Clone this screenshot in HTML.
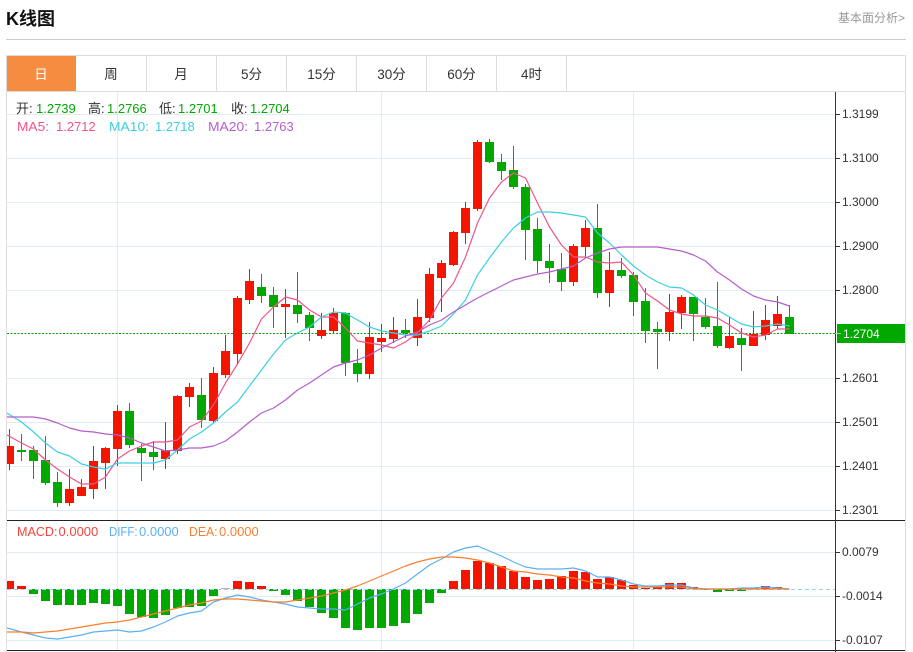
<!DOCTYPE html>
<html><head><meta charset="utf-8"><style>
html,body{margin:0;padding:0;background:#fff;width:913px;height:652px;overflow:hidden}
svg{display:block;font-family:"Liberation Sans","Noto Sans CJK SC",sans-serif}
</style></head><body>
<svg width="913" height="652" viewBox="0 0 913 652" xmlns="http://www.w3.org/2000/svg">
<rect width="913" height="652" fill="#fff"/>
<text x="6" y="25" font-size="18" font-weight="bold" fill="#111">K线图</text>
<text x="838" y="22" font-size="12" fill="#999">基本面分析&gt;</text>
<path d="M6 39.5H906" stroke="#ccc" fill="none"/>
<!-- tabs -->
<path d="M6 55.5H905.5V652M6.5 55.5V652M6 91.5H905.5" stroke="#ddd" fill="none"/>
<path d="M146.5 56V91M216.5 56V91M286.5 56V91M356.5 56V91M426.5 56V91M496.5 56V91M566.5 56V91" stroke="#ddd" fill="none"/>
<rect x="7" y="56" width="69" height="35" fill="#f58c40"/>
<g font-size="13.5" text-anchor="middle" fill="#333">
<text x="41" y="79" fill="#fff">日</text>
<text x="111" y="79">周</text>
<text x="181" y="79">月</text>
<text x="251.500" y="79">5分</text>
<text x="321.500" y="79">15分</text>
<text x="391.500" y="79">30分</text>
<text x="461.500" y="79">60分</text>
<text x="531.500" y="79">4时</text>
</g>
<!-- grid -->
<path d="M7 114.5H835M7 158.5H835M7 202.5H835M7 246.5H835M7 290.5H835M7 378.5H835M7 422.5H835M7 466.5H835M7 510.5H835M7 552.5H835M7 596.5H835M7 640.5H835M117.5 92V650M381.5 92V650M633.5 92V650" stroke="#e2ebf2" fill="none"/>
<path d="M7 333.5H835" stroke="#129a12" stroke-dasharray="2 1.5" fill="none"/>
<!-- candles -->
<path fill="none" stroke="#f41500" d="M9.5 429V470M69.5 469V506M81.5 479V496M93.5 446V499M105.5 447V489M117.5 405V466M165.5 422V469M177.5 395V454M189.5 383V407M213.5 367V423M225.5 335V378M237.5 296V365M249.5 269V304M285.5 289V338M321.5 313V339M333.5 308V333M369.5 322V379M381.5 324V352M393.5 317V343M417.5 299V346M429.5 268V322M441.5 260V312M453.5 231V266M465.5 202V244M477.5 140V211M573.5 244V286M585.5 220V257M609.5 252V307M669.5 294V341M681.5 295V329M729.5 317V349M753.5 311V346M765.5 305V340M777.5 296V329"/>
<path fill="#f41500" d="M7 446h7v18h-7zM65 489h9v14h-9zM77 487h9v9h-9zM89 461h9v28h-9zM101 448h9v15h-9zM113 411h9v38h-9zM161 450h9v9h-9zM173 396h9v55h-9zM185 387h9v10h-9zM209 373h9v48h-9zM221 351h9v24h-9zM233 298h9v56h-9zM245 281h9v19h-9zM281 304h9v3h-9zM317 330h9v6h-9zM329 313h9v18h-9zM365 337h9v37h-9zM377 338h9v4h-9zM389 330h9v9h-9zM413 317h9v21h-9zM425 274h9v44h-9zM437 263h9v15h-9zM449 232h9v33h-9zM461 208h9v25h-9zM473 142h9v67h-9zM569 246h9v36h-9zM581 228h9v19h-9zM605 270h9v23h-9zM665 312h9v20h-9zM677 297h9v16h-9zM725 336h9v12h-9zM749 334h9v12h-9zM761 320h9v15h-9zM773 314h9v12h-9z"/>
<path fill="none" stroke="#00a800" d="M21.5 434V461M33.5 446V479M45.5 436V485M57.5 472V507M129.5 403V448M141.5 444V481M153.5 441V470M201.5 378V428M261.5 274V303M273.5 287V328M297.5 272V323M309.5 312V341M345.5 312V376M357.5 349V382M405.5 319V338M489.5 139V163M501.5 154V180M513.5 146V189M525.5 184V260M537.5 218V273M549.5 244V283M561.5 253V291M597.5 204V298M621.5 258V278M633.5 272V316M645.5 288V343M657.5 322V369M693.5 297V341M705.5 298V329M717.5 282V348M741.5 328V371M789.5 305V334"/>
<path fill="#00a800" d="M17 450h9v2h-9zM29 450h9v11h-9zM41 460h9v23h-9zM53 482h9v21h-9zM125 411h9v34h-9zM137 448h9v5h-9zM149 452h9v5h-9zM197 395h9v25h-9zM257 287h9v9h-9zM269 295h9v12h-9zM293 305h9v9h-9zM305 315h9v13h-9zM341 313h9v50h-9zM353 363h9v11h-9zM401 330h9v3h-9zM485 142h9v20h-9zM497 162h9v9h-9zM509 170h9v17h-9zM521 187h9v43h-9zM533 229h9v32h-9zM545 261h9v7h-9zM557 269h9v13h-9zM593 228h9v65h-9zM617 270h9v6h-9zM629 275h9v27h-9zM641 301h9v30h-9zM653 329h9v3h-9zM689 297h9v17h-9zM701 317h9v10h-9zM713 326h9v20h-9zM737 338h9v7h-9zM785 317h9v17h-9z"/>
<!-- MA lines -->
<g fill="none" stroke-width="1.2" stroke-linejoin="round">
<polyline stroke="#f0558a" points="7,435 21.5,443 33.5,449 45.5,460 57.5,469 69.5,477 81.5,484 93.5,484 105.5,477 117.5,459 129.5,451 141.5,446 153.5,442 165.5,442 177.5,440 189.5,427 201.5,421 213.5,405 225.5,383 237.5,364 249.5,343 261.5,319 273.5,307 285.5,297 297.5,300 309.5,310 321.5,317 333.5,317 345.5,328 357.5,341 369.5,343 381.5,345 393.5,348 405.5,342 417.5,333 429.5,320 441.5,298 453.5,283 465.5,257 477.5,223 489.5,198 501.5,182 513.5,173 525.5,178 537.5,203 549.5,227 561.5,245 573.5,257 585.5,257 597.5,262 609.5,263 621.5,262 633.5,275 645.5,293 657.5,301 669.5,310 681.5,314 693.5,316 705.5,316 717.5,318 729.5,325 741.5,333 753.5,337 765.5,335 777.5,329 789.5,329"/>
<polyline stroke="#3ccfe3" points="7,413 21.5,422 33.5,432 45.5,443 57.5,452 69.5,456 81.5,464 93.5,467 105.5,469 117.5,463 129.5,463 141.5,463 153.5,463 165.5,460 177.5,450 189.5,439 201.5,432 213.5,423 225.5,412 237.5,402 249.5,386 261.5,370 273.5,354 285.5,340 297.5,333 309.5,327 321.5,317 333.5,312 345.5,313 357.5,320 369.5,327 381.5,331 393.5,333 405.5,335 417.5,335 429.5,331 441.5,326 453.5,314 465.5,300 477.5,275 489.5,258 501.5,242 513.5,228 525.5,218 537.5,212 549.5,212 561.5,213 573.5,215 585.5,217 597.5,233 609.5,243 621.5,255 633.5,266 645.5,275 657.5,282 669.5,287 681.5,288 693.5,295 705.5,305 717.5,310 729.5,317 741.5,324 753.5,327 765.5,326 777.5,324 789.5,326"/>
<polyline stroke="#b45fcc" points="7,417 33.5,417 45.5,419 57.5,423 69.5,428 81.5,431 93.5,432 105.5,434 117.5,435 129.5,438 141.5,443 153.5,447 165.5,451 177.5,450 189.5,448 201.5,448 213.5,446 225.5,441 237.5,432 249.5,422 261.5,413 273.5,408 285.5,400 297.5,390 309.5,383 321.5,375 333.5,367 345.5,363 357.5,360 369.5,355 381.5,348 393.5,342 405.5,336 417.5,332 429.5,325 441.5,320 453.5,312 465.5,305 477.5,298 489.5,292 501.5,286 513.5,280 525.5,277 537.5,274 549.5,272 561.5,269 573.5,266 585.5,258 597.5,253 609.5,249 621.5,247 633.5,247 645.5,247 657.5,247 669.5,249 681.5,251 693.5,255 705.5,261 717.5,272 729.5,280 741.5,289 753.5,296 765.5,300 777.5,302 789.5,306"/>
</g>
<!-- MACD bars -->
<path fill="#f41500" d="M7 581h7v8h-7zM17 586h9v3h-9zM233 581h9v8h-9zM245 582h9v7h-9zM257 586h9v3h-9zM449 581h9v8h-9zM461 570h9v19h-9zM473 561h9v28h-9zM485 563h9v26h-9zM497 566h9v23h-9zM509 571h9v18h-9zM521 577h9v12h-9zM533 580h9v9h-9zM545 579h9v10h-9zM557 576h9v13h-9zM569 571h9v18h-9zM581 572h9v17h-9zM593 579h9v10h-9zM605 577h9v12h-9zM617 580h9v9h-9zM629 585h9v4h-9zM641 588h9v1h-9zM653 586h9v3h-9zM665 583h9v6h-9zM677 583h9v6h-9zM689 587h9v2h-9zM749 588h9v1h-9zM761 586h9v3h-9zM773 587h9v2h-9z"/>
<rect x="221" y="588" width="9" height="1" fill="#f0a0a0"/>
<path fill="#00a800" d="M29 589h9v5h-9zM41 589h9v12h-9zM53 589h9v16h-9zM65 589h9v16h-9zM77 589h9v16h-9zM89 589h9v14h-9zM101 589h9v15h-9zM113 589h9v17h-9zM125 589h9v25h-9zM137 589h9v28h-9zM149 589h9v29h-9zM161 589h9v26h-9zM173 589h9v19h-9zM185 589h9v18h-9zM197 589h9v17h-9zM209 589h9v7h-9zM269 589h9v2h-9zM281 589h9v6h-9zM293 589h9v12h-9zM305 589h9v18h-9zM317 589h9v24h-9zM329 589h9v29h-9zM341 589h9v39h-9zM353 589h9v41h-9zM365 589h9v39h-9zM377 589h9v39h-9zM389 589h9v37h-9zM401 589h9v34h-9zM413 589h9v25h-9zM425 589h9v14h-9zM437 589h9v4h-9zM701 589h9v1h-9zM713 589h9v3h-9zM725 589h9v2h-9zM737 589h9v2h-9z"/>
<path d="M7 589.5H835" stroke="#8fd8ee" stroke-dasharray="4 3" fill="none"/>
<g fill="none" stroke-width="1.2" stroke-linejoin="round">
<polyline stroke="#5cb0f5" points="7,628 21.5,632 33.5,635 45.5,638 57.5,639 69.5,637 81.5,635 93.5,632 105.5,631 117.5,630 129.5,632 141.5,631 153.5,627 165.5,622 177.5,616 189.5,613 201.5,611 213.5,602 225.5,598 237.5,595 249.5,597 261.5,600 273.5,602 285.5,604 297.5,607 309.5,608 321.5,609 333.5,609 345.5,610 357.5,604 369.5,598 381.5,594 393.5,589 405.5,583 417.5,574 429.5,565 441.5,559 453.5,552 465.5,548 477.5,546 489.5,551 501.5,556 513.5,562 525.5,567 537.5,569 549.5,569 561.5,569 573.5,568 585.5,571 597.5,577 609.5,577 621.5,580 633.5,584 645.5,586 657.5,586 669.5,585 681.5,585 693.5,588 705.5,589 729.5,589 741.5,588 753.5,588 765.5,587 777.5,588 789.5,589"/>
<polyline stroke="#f97f2e" points="7,632 21.5,632 33.5,633 45.5,632 57.5,631 69.5,629 81.5,627 93.5,625 105.5,623 117.5,622 129.5,620 141.5,617 153.5,614 165.5,611 177.5,608 189.5,605 201.5,603 213.5,600 225.5,599 237.5,599 249.5,600 261.5,601 273.5,602 285.5,602 297.5,600 309.5,598 321.5,596 333.5,593 345.5,590 357.5,586 369.5,581 381.5,576 393.5,571 405.5,566 417.5,562 429.5,559 441.5,557 453.5,557 465.5,558 477.5,560 489.5,563 501.5,567 513.5,571 525.5,572 537.5,574 549.5,575 561.5,577 573.5,578 585.5,581 597.5,583 609.5,584 621.5,586 633.5,587 681.5,587 693.5,589 789.5,589"/>
</g>
<!-- frame -->
<path d="M7 520.5H905M7 650.5H905" stroke="#222" fill="none"/>
<path d="M835.5 92V652" stroke="#333" fill="none"/>
<path d="M835 114.5h5M835 158.5h5M835 202.5h5M835 246.5h5M835 290.5h5M835 378.5h5M835 422.5h5M835 466.5h5M835 510.5h5M835 552.5h5M835 596.5h5M835 640.5h5" stroke="#333" fill="none"/>
<rect x="837" y="324" width="68" height="19" fill="#00a800"/>
<path d="M835 333.5h6" stroke="#9ad89a" fill="none"/>
<g font-size="12" fill="#333">
<text x="842" y="118">1.3199</text>
<text x="842" y="162">1.3100</text>
<text x="842" y="206">1.3000</text>
<text x="842" y="250">1.2900</text>
<text x="842" y="294">1.2800</text>
<text x="843" y="338" fill="#fff">1.2704</text>
<text x="842" y="382">1.2601</text>
<text x="842" y="426">1.2501</text>
<text x="842" y="470">1.2401</text>
<text x="842" y="514">1.2301</text>
<text x="842" y="556">0.0079</text>
<text x="842" y="600">-0.0014</text>
<text x="842" y="644">-0.0107</text>
</g>
<g font-size="13">
<text x="16" y="113" fill="#333">开:</text><text x="36" y="113" fill="#00a800">1.2739</text>
<text x="88" y="113" fill="#333">高:</text><text x="107" y="113" fill="#00a800">1.2766</text>
<text x="159" y="113" fill="#333">低:</text><text x="178" y="113" fill="#00a800">1.2701</text>
<text x="231" y="113" fill="#333">收:</text><text x="250" y="113" fill="#00a800">1.2704</text>
<text x="17" y="131" fill="#f0558a" textLength="32" lengthAdjust="spacingAndGlyphs">MA5:</text><text x="56" y="131" fill="#f0558a">1.2712</text>
<text x="109" y="131" fill="#3ccfe3" textLength="40" lengthAdjust="spacingAndGlyphs">MA10:</text><text x="155" y="131" fill="#3ccfe3">1.2718</text>
<text x="208" y="131" fill="#b45fcc" textLength="40" lengthAdjust="spacingAndGlyphs">MA20:</text><text x="254" y="131" fill="#b45fcc">1.2763</text>
<text x="17" y="536" fill="#f4453c" textLength="40.500" lengthAdjust="spacingAndGlyphs">MACD:</text><text x="58.500" y="536" fill="#f4453c">0.0000</text>
<text x="109" y="536" fill="#5cb0f5" textLength="28.500" lengthAdjust="spacingAndGlyphs">DIFF:</text><text x="139" y="536" fill="#5cb0f5">0.0000</text>
<text x="189" y="536" fill="#f97f2e" textLength="28.500" lengthAdjust="spacingAndGlyphs">DEA:</text><text x="219" y="536" fill="#f97f2e">0.0000</text>
</g>
</svg>
</body></html>
